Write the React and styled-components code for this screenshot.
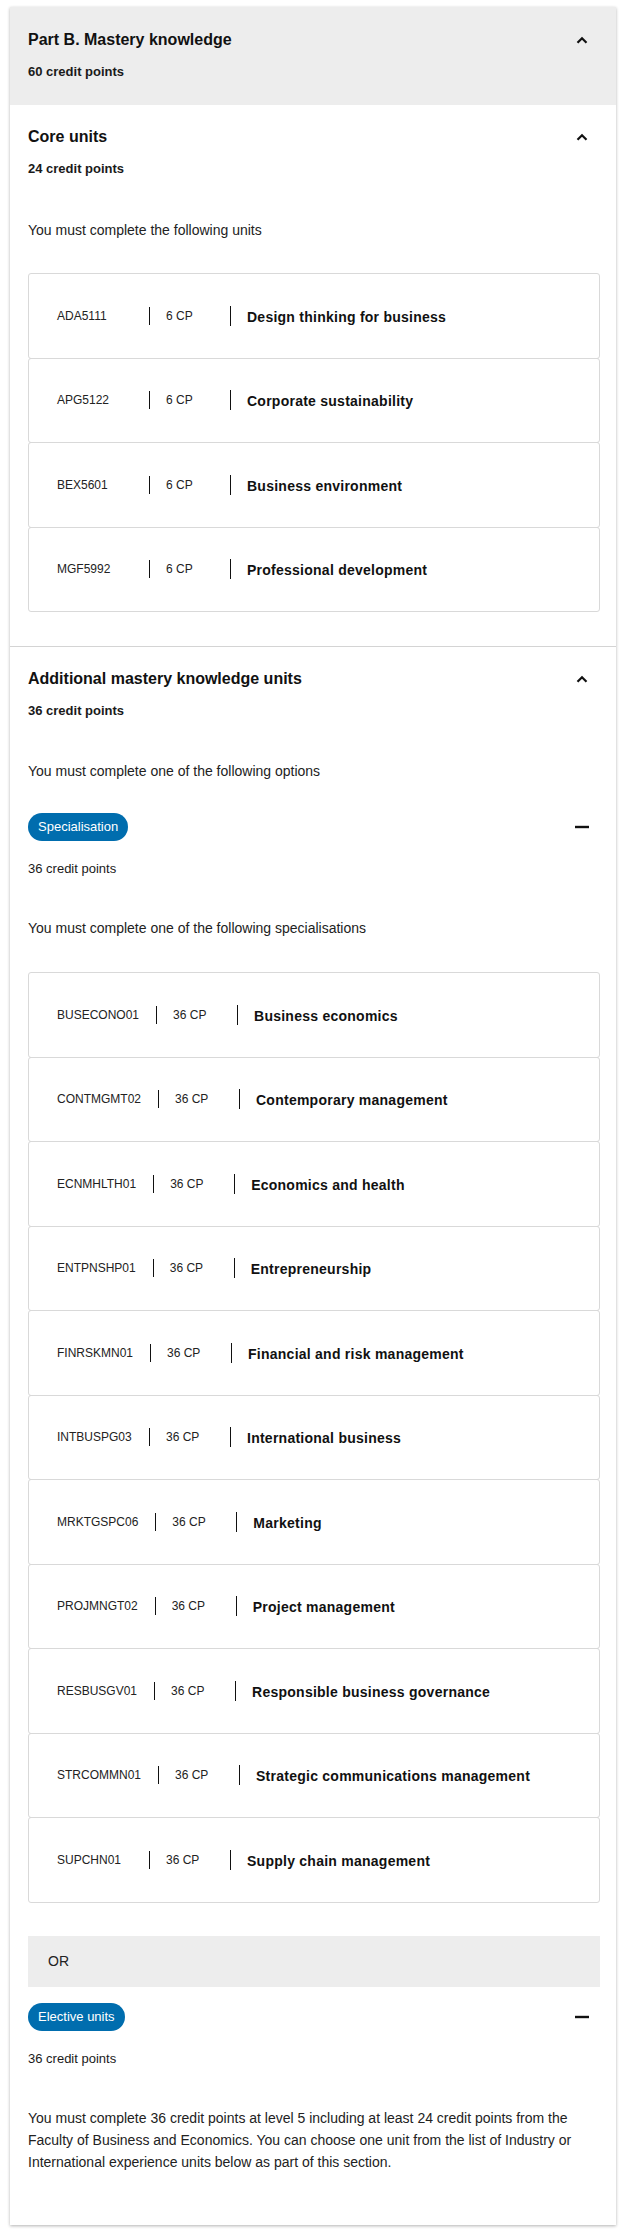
import styled, { createGlobalStyle } from 'styled-components';

const GlobalStyle = createGlobalStyle`
    body {
        margin: 0;
        font-family: "Liberation Sans", Arial, sans-serif;
        color: #1a1a1a;
        background: #fff;
    }
`;

const Page = styled.div`
    padding: 7px 9px 15px 10px;
`;

const Card = styled.div`
    background: #fff;
    box-shadow: 0 1px 3px rgba(0, 0, 0, 0.3);
`;

const PartHeader = styled.div`
    background: #ededed;
    padding: 22px 16px 24px 18px;
`;

const Section = styled.div`
    padding: 21px 16px ${p => p.$bottom || 34}px 18px;
    border-top: ${p => (p.$divided ? '1px solid #d4d4d4' : 'none')};
`;

const TitleRow = styled.div`
    display: flex;
    justify-content: space-between;
    align-items: center;
`;

const Heading = styled.h2`
    margin: 0;
    font-size: 16px;
    line-height: 22px;
    font-weight: 700;
    color: #111;
`;

const Credits = styled.div`
    margin-top: ${p => p.$top || 12}px;
    font-size: 13px;
    line-height: 18px;
    font-weight: ${p => (p.$bold ? 700 : 400)};
    color: #1a1a1a;
`;

const Intro = styled.p`
    margin: ${p => p.$top || 42}px 0 0;
    font-size: 14px;
    line-height: ${p => p.$lh || 20}px;
    color: #222;
`;

const IconBox = styled.span`
    display: flex;
    align-items: center;
    justify-content: center;
    width: 14px;
    margin-right: 11px;
`;

const BadgeRow = styled.div`
    display: flex;
    justify-content: space-between;
    align-items: center;
    margin-top: ${p => p.$top}px;
`;

const Badge = styled.span`
    display: inline-block;
    height: 28px;
    line-height: 28px;
    padding: 0 10px;
    border-radius: 14px;
    background: #006dae;
    color: #fff;
    font-size: 13px;
`;

const UnitList = styled.div`
    margin-top: ${p => p.$top || 33}px;
`;

const UnitRow = styled.div`
    display: flex;
    align-items: center;
    height: 85.5px;
    box-sizing: border-box;
    padding: 0 28px;
    border: 1px solid #d9d9d9;
    border-radius: 3px;
    & + & {
        margin-top: -1px;
    }
`;

const Code = styled.span`
    box-sizing: border-box;
    min-width: 92px;
    padding-right: 17px;
    font-size: 12px;
    line-height: 18px;
    color: #222;
`;

const Points = styled.span`
    box-sizing: border-box;
    width: 81px;
    padding-left: 16px;
    border-left: 1px solid #111;
    font-size: 12px;
    line-height: 18px;
    color: #222;
`;

const UnitTitle = styled.span`
    padding-left: 16px;
    border-left: 1px solid #111;
    font-size: 14px;
    line-height: 18px;
    font-weight: 700;
    letter-spacing: 0.25px;
    color: #111;
    padding-top: 2px;
`;

const OrBox = styled.div`
    margin-top: 33px;
    height: 51px;
    display: flex;
    align-items: center;
    padding-left: 20px;
    background: #ededed;
    font-size: 14px;
    color: #222;
`;

const Chevron = () => (
    <IconBox>
        <svg width="12" height="8" viewBox="0 0 12 8">
            <polyline points="1.5,6.8 6,2.2 10.5,6.8" fill="none" stroke="#111" strokeWidth="2.2" />
        </svg>
    </IconBox>
);

const Minus = () => (
    <IconBox>
        <svg width="14" height="4" viewBox="0 0 14 4">
            <rect x="0" y="0.8" width="14" height="2.4" fill="#111" />
        </svg>
    </IconBox>
);

const coreUnits = [
    ['ADA5111', '6 CP', 'Design thinking for business'],
    ['APG5122', '6 CP', 'Corporate sustainability'],
    ['BEX5601', '6 CP', 'Business environment'],
    ['MGF5992', '6 CP', 'Professional development'],
];

const specialisations = [
    ['BUSECONO01', '36 CP', 'Business economics'],
    ['CONTMGMT02', '36 CP', 'Contemporary management'],
    ['ECNMHLTH01', '36 CP', 'Economics and health'],
    ['ENTPNSHP01', '36 CP', 'Entrepreneurship'],
    ['FINRSKMN01', '36 CP', 'Financial and risk management'],
    ['INTBUSPG03', '36 CP', 'International business'],
    ['MRKTGSPC06', '36 CP', 'Marketing'],
    ['PROJMNGT02', '36 CP', 'Project management'],
    ['RESBUSGV01', '36 CP', 'Responsible business governance'],
    ['STRCOMMN01', '36 CP', 'Strategic communications management'],
    ['SUPCHN01', '36 CP', 'Supply chain management'],
];

const Units = ({ items, top }) => (
    <UnitList $top={top}>
        {items.map(([code, cp, title]) => (
            <UnitRow key={code}>
                <Code>{code}</Code>
                <Points>{cp}</Points>
                <UnitTitle>{title}</UnitTitle>
            </UnitRow>
        ))}
    </UnitList>
);

const App = () => {
    return (
        <Page>
            <GlobalStyle />
            <Card>
                <PartHeader>
                    <TitleRow>
                        <Heading>Part B. Mastery knowledge</Heading>
                        <Chevron />
                    </TitleRow>
                    <Credits $bold>60 credit points</Credits>
                </PartHeader>

                <Section>
                    <TitleRow>
                        <Heading>Core units</Heading>
                        <Chevron />
                    </TitleRow>
                    <Credits $bold>24 credit points</Credits>
                    <Intro>You must complete the following units</Intro>
                    <Units items={coreUnits} top={33} />
                </Section>

                <Section $divided $bottom={52}>
                    <TitleRow>
                        <Heading>Additional mastery knowledge units</Heading>
                        <Chevron />
                    </TitleRow>
                    <Credits $bold>36 credit points</Credits>
                    <Intro $top={41}>You must complete one of the following options</Intro>

                    <BadgeRow $top={32}>
                        <Badge>Specialisation</Badge>
                        <Minus />
                    </BadgeRow>
                    <Credits $top={19}>36 credit points</Credits>
                    <Intro $top={40}>You must complete one of the following specialisations</Intro>
                    <Units items={specialisations} top={34} />

                    <OrBox>OR</OrBox>

                    <BadgeRow $top={16}>
                        <Badge>Elective units</Badge>
                        <Minus />
                    </BadgeRow>
                    <Credits $top={19}>36 credit points</Credits>
                    <Intro $top={39} $lh={22}>
                        You must complete 36 credit points at level 5 including at least 24 credit points from the
                        Faculty of Business and Economics. You can choose one unit from the list of Industry or
                        International experience units below as part of this section.
                    </Intro>
                </Section>
            </Card>
        </Page>
    );
};

export default App;
